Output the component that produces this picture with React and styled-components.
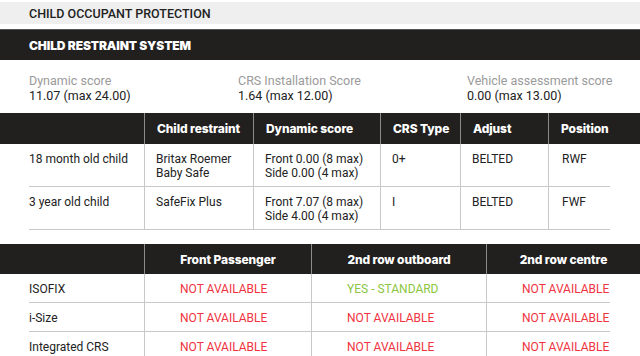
import React from "react";
import styled, { createGlobalStyle } from "styled-components";

const Global = createGlobalStyle`
  html, body { margin: 0; padding: 0; background: #fff; }
  body { font-family: Roboto, "Liberation Sans", sans-serif; color: #222; }
`;

const Page = styled.div`
  width: 640px;
  height: 356px;
  overflow: hidden;
  padding-top: 2px;
  box-sizing: border-box;
`;

const SectionBar = styled.div`
  height: 22px;
  background: #efefef;
  display: flex;
  align-items: center;
  padding-left: 29px;
  font-size: 12.5px;
  font-weight: 500;
  color: #222;
`;

const DarkBar = styled.div`
  margin-top: 5px;
  height: 30px;
  background: #221f1f;
  border-top: 1px solid #555;
  display: flex;
  align-items: center;
  padding-left: 29px;
  font-family: Inter, Roboto, sans-serif;
  font-weight: 900;
  font-size: 12px;
  letter-spacing: -0.1px;
  color: #fff;
`;

const Scores = styled.div`
  display: grid;
  grid-template-columns: 209px 229px 1fr;
  padding: 13px 0 10px 29px;
  font-size: 12.5px;
  line-height: 15px;
`;

const Score = styled.div`
  display: flex;
  flex-direction: column;
`;

const ScoreLabel = styled.span`
  color: #9a9a9a;
`;

const ScoreValue = styled.span`
  color: #222;
`;

const HeadRow = styled.div`
  display: grid;
  grid-template-columns: ${(p) => p.$cols};
  height: ${(p) => p.$h}px;
  background: #221f1f;
  color: #fff;
  font-family: Inter, Roboto, sans-serif;
  font-weight: 800;
  font-size: 12px;
  letter-spacing: -0.1px;
  margin-top: ${(p) => p.$mt || 0}px;
`;

const HeadCell = styled.div`
  display: flex;
  align-items: center;
  justify-content: ${(p) => (p.$center ? "center" : "flex-start")};
  padding-left: ${(p) => (p.$center ? 0 : 12)}px;
  border-left: ${(p) => (p.$first ? "none" : "1px solid #8a8a8a")};
`;

const BodyRow = styled.div`
  margin-left: 29px;
  width: 581px;
  display: grid;
  grid-template-columns: ${(p) => p.$cols};
  border-bottom: 1px solid #c8c8c8;
  font-size: 12px;
  line-height: 14px;
  color: #222;
`;

const Cell = styled.div`
  padding: ${(p) => p.$pad};
  border-left: ${(p) => (p.$first ? "none" : "1px solid #c8c8c8")};
  color: ${(p) => p.$color || "inherit"};
  white-space: nowrap;
`;

const RED = "#ef3340";
const GREEN = "#8cc63f";

const crsCols1 = "144px 109px 127px 80px 88px 1fr";
const crsBody1 = "115px 109px 127px 80px 88px 1fr";
const crsRows = [
  ["18 month old child", ["Britax Roemer", "Baby Safe"], ["Front 0.00 (8 max)", "Side 0.00 (4 max)"], "0+", "BELTED", "RWF"],
  ["3 year old child", ["SafeFix Plus"], ["Front 7.07 (8 max)", "Side 4.00 (4 max)"], "I", "BELTED", "FWF"],
];

const seatCols = "144px 167px 175px 1fr";
const seatBody = "115px 167px 175px 1fr";
const seatRows = [
  ["ISOFIX", ["NOT AVAILABLE", RED], ["YES - STANDARD", GREEN], ["NOT AVAILABLE", RED]],
  ["i-Size", ["NOT AVAILABLE", RED], ["NOT AVAILABLE", RED], ["NOT AVAILABLE", RED]],
  ["Integrated CRS", ["NOT AVAILABLE", RED], ["NOT AVAILABLE", RED], ["NOT AVAILABLE", RED]],
];

const Lines = ({ items }) =>
  items.map((t, i) => <div key={i}>{t}</div>);

export default function App() {
  return (
    <Page>
      <Global />
      <SectionBar>CHILD OCCUPANT PROTECTION</SectionBar>
      <DarkBar>CHILD RESTRAINT SYSTEM</DarkBar>
      <Scores>
        <Score>
          <ScoreLabel>Dynamic score</ScoreLabel>
          <ScoreValue>11.07 (max 24.00)</ScoreValue>
        </Score>
        <Score>
          <ScoreLabel>CRS Installation Score</ScoreLabel>
          <ScoreValue>1.64 (max 12.00)</ScoreValue>
        </Score>
        <Score>
          <ScoreLabel>Vehicle assessment score</ScoreLabel>
          <ScoreValue>0.00 (max 13.00)</ScoreValue>
        </Score>
      </Scores>

      <HeadRow $cols={crsCols1} $h={31}>
        <HeadCell $first />
        <HeadCell>Child restraint</HeadCell>
        <HeadCell>Dynamic score</HeadCell>
        <HeadCell>CRS Type</HeadCell>
        <HeadCell>Adjust</HeadCell>
        <HeadCell>Position</HeadCell>
      </HeadRow>
      {crsRows.map((r, i) => (
        <BodyRow key={i} $cols={crsBody1}>
          <Cell $first $pad="8px 0 6px 0">{r[0]}</Cell>
          <Cell $pad="8px 0 6px 11px"><Lines items={r[1]} /></Cell>
          <Cell $pad="8px 0 6px 11px"><Lines items={r[2]} /></Cell>
          <Cell $pad="8px 0 6px 11px">{r[3]}</Cell>
          <Cell $pad="8px 0 6px 11px">{r[4]}</Cell>
          <Cell $pad="8px 0 6px 13px">{r[5]}</Cell>
        </BodyRow>
      ))}

      <HeadRow $cols={seatCols} $h={30} $mt={14}>
        <HeadCell $first />
        <HeadCell $center>Front Passenger</HeadCell>
        <HeadCell $center>2nd row outboard</HeadCell>
        <HeadCell $center>2nd row centre</HeadCell>
      </HeadRow>
      {seatRows.map((r, i) => (
        <BodyRow key={i} $cols={seatBody}>
          <Cell $first $pad="8px 0 6px 0">{r[0]}</Cell>
          {r.slice(1).map(([t, c], j) => (
            <Cell key={j} $pad="8px 0 6px 35px" $color={c}>{t}</Cell>
          ))}
        </BodyRow>
      ))}
    </Page>
  );
}
